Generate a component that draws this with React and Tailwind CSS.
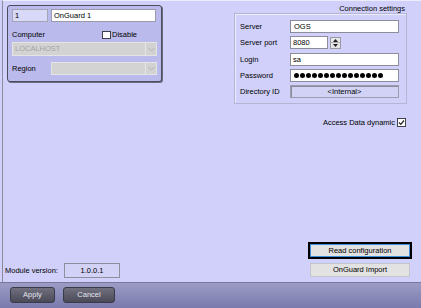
import React from "react";

function Chevron() {
  return (
    <div className="w-[11px] h-full border-l border-[#e6e6e6] bg-[#d2d2d2] flex items-center justify-center">
      <svg width="7" height="5" viewBox="0 0 7 5">
        <path d="M0.5 1 L3.5 4 L6.5 1" fill="none" stroke="#b0b0b0" strokeWidth="1" />
      </svg>
    </div>
  );
}

function Field({ label, children, mt }) {
  return (
    <div className={`flex items-center h-[13px] ${mt}`}>
      <div className="w-[55px] pl-[5px] leading-none">{label}</div>
      {children}
    </div>
  );
}

export default function App() {
  return (
    <div className="w-[421px] h-[308px] flex flex-col bg-[#d0d0fa] font-['Liberation_Sans',Arial,sans-serif] text-[7.5px] text-black overflow-hidden">
      <div className="flex-1 flex flex-col ml-[2px] border-l border-l-[#8c8c9c] border-t border-t-[#ececff]">
        <div className="flex items-start pt-[4px] pl-[4px]">
          {/* Left panel */}
          <div className="w-[155px] h-[77px] bg-[#babaec] border border-[#4c4c5c] rounded-[3px] shadow-[1px_1px_0_#6a6a80] flex flex-col px-[4px] pt-[3px]">
            <div className="flex h-[13px] gap-[3px]">
              <div className="w-[36px] h-full bg-[#d8d8f8] border border-[#a4a4b4] flex items-center pl-[2px] leading-none">1</div>
              <div className="w-[105px] h-full bg-white border border-[#9a9aa8] flex items-center pl-[2px] leading-none">OnGuard 1</div>
            </div>
            <div className="flex items-center h-[9px] mt-[8px]">
              <div className="w-[90px] leading-none">Computer</div>
              <div className="w-[9px] h-[8px] bg-white border border-[#404048]" />
              <div className="ml-[1px] leading-none">Disable</div>
            </div>
            <div className="flex h-[14px] mt-[3px] bg-[#d3d3d3] border border-[#e4e4e4]">
              <div className="flex-1 flex items-center pl-[2px] text-[#a3a3a3] leading-none">LOCALHOST</div>
              <Chevron />
            </div>
            <div className="flex items-center h-[13px] mt-[6px]">
              <div className="w-[39px] leading-none">Region</div>
              <div className="flex-1 flex h-full bg-[#d3d3d3] border border-[#e4e4e4]">
                <div className="flex-1" />
                <Chevron />
              </div>
            </div>
          </div>

          {/* Right column */}
          <div className="ml-auto mr-[14px] w-[173px] flex flex-col">
            <div className="h-[8px] leading-[8px] text-right pr-[2px]">Connection settings</div>
            <div className="h-[91px] border border-[#b4b4d4] shadow-[inset_1px_1px_0_#ececff] flex flex-col pr-[2px]">
              <Field label="Server" mt="mt-[6px]">
                <div className="w-[109px] h-full bg-white border border-[#8e8e9a] flex items-center pl-[3px] leading-none">OGS</div>
              </Field>
              <Field label="Server port" mt="mt-[3px]">
                <div className="w-[38px] h-full bg-white border border-[#8e8e9a] flex items-center pl-[2px] leading-none">8080</div>
                <div className="ml-[2px] w-[11px] h-[12px] bg-[#e6e6e6] border border-[#9a9aa4] flex flex-col">
                  <div className="flex-1 flex items-end justify-center pb-[0.5px]">
                    <svg width="5" height="3" viewBox="0 0 5 3"><path d="M0 3 L2.5 0 L5 3 Z" fill="#202020" /></svg>
                  </div>
                  <div className="h-px bg-[#b0b0b0]" />
                  <div className="flex-1 flex items-start justify-center pt-[0.5px]">
                    <svg width="5" height="3" viewBox="0 0 5 3"><path d="M0 0 L2.5 3 L5 0 Z" fill="#202020" /></svg>
                  </div>
                </div>
              </Field>
              <Field label="Login" mt="mt-[4px]">
                <div className="w-[109px] h-full bg-white border border-[#8e8e9a] flex items-center pl-[2px] leading-none">sa</div>
              </Field>
              <Field label="Password" mt="mt-[3px]">
                <div className="w-[109px] h-full bg-white border border-[#8e8e9a] flex items-center pl-[3px] gap-px">
                  {Array.from({ length: 15 }).map((_, i) => (
                    <span key={i} className="w-[5px] h-[5px] rounded-full bg-black" />
                  ))}
                </div>
              </Field>
              <Field label="Directory ID" mt="mt-[3px]">
                <div className="w-[109px] h-full bg-[#d2d2f6] border border-[#9c9cac] shadow-[inset_1px_1px_0_#8a8a98] flex items-center justify-center leading-none">&lt;Internal&gt;</div>
              </Field>
            </div>
          </div>
        </div>

        {/* Access data dynamic */}
        <div className="flex items-center justify-end pr-[15px] mt-[14px] h-[9px]">
          <span className="leading-none mr-[2px]">Access Data dynamic</span>
          <div className="w-[9px] h-[9px] bg-white border border-[#404048] flex items-center justify-center">
            <svg width="7" height="7" viewBox="0 0 7 7">
              <path d="M1 3.5 L2.8 5.3 L6 1.5" fill="none" stroke="#202020" strokeWidth="1.2" />
            </svg>
          </div>
        </div>

        <div className="flex-1" />

        {/* Bottom row */}
        <div className="flex items-end justify-between pl-[2px] pr-[9px] pb-[4px]">
          <div className="flex items-center">
            <span className="w-[59px] leading-none">Module version:</span>
            <div className="w-[56px] h-[15px] bg-[#d2d2f6] border border-[#8e8e9e] flex items-center justify-center leading-none">1.0.0.1</div>
          </div>
          <div className="flex flex-col items-end gap-[4px] mb-[1px]">
            <div className="w-[104px] h-[17px] border-2 border-black bg-[#e2e2e2] shadow-[inset_0_0_0_1px_#3c8ce0] flex items-center justify-center leading-none">Read configuration</div>
            <div className="w-[100px] h-[14px] mr-[2px] bg-[#e2e2e2] border border-[#c4c4cc] flex items-center justify-center leading-none">OnGuard Import</div>
          </div>
        </div>
      </div>

      {/* Bottom bar */}
      <div className="h-[26px] border-t border-[#76769e] bg-gradient-to-b from-[#9c9cc6] to-[#7a7aac] flex items-start gap-[8px] pl-[10px] pt-[4px]">
        <div className="w-[45px] h-[16px] rounded-[3px] border border-[#3a3a48] bg-gradient-to-b from-[#70707e] to-[#4a4a58] text-[#e4e4ee] flex items-center justify-center leading-none">Apply</div>
        <div className="w-[52px] h-[16px] rounded-[3px] border border-[#3a3a48] bg-gradient-to-b from-[#70707e] to-[#4a4a58] text-[#e4e4ee] flex items-center justify-center leading-none">Cancel</div>
      </div>
    </div>
  );
}
